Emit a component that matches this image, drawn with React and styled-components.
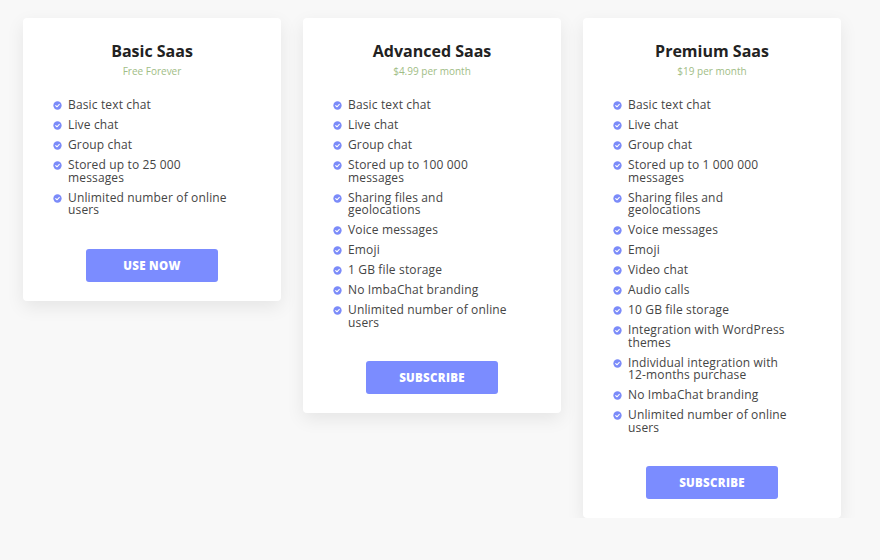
import React from 'react';
import styled, { createGlobalStyle } from 'styled-components';

const GlobalStyle = createGlobalStyle`
  body {
    margin: 0;
    background: #f8f8f8;
    font-family: "Open Sans", "Noto Sans", sans-serif;
  }
`;

const plans = [
  {
    name: 'Basic Saas',
    price: 'Free Forever',
    button: 'Use now',
    features: [
      'Basic text chat',
      'Live chat',
      'Group chat',
      'Stored up to 25 000 messages',
      'Unlimited number of online users',
    ],
  },
  {
    name: 'Advanced Saas',
    price: '$4.99 per month',
    button: 'Subscribe',
    features: [
      'Basic text chat',
      'Live chat',
      'Group chat',
      'Stored up to 100 000 messages',
      'Sharing files and geolocations',
      'Voice messages',
      'Emoji',
      '1 GB file storage',
      'No ImbaChat branding',
      'Unlimited number of online users',
    ],
  },
  {
    name: 'Premium Saas',
    price: '$19 per month',
    button: 'Subscribe',
    features: [
      'Basic text chat',
      'Live chat',
      'Group chat',
      'Stored up to 1 000 000 messages',
      'Sharing files and geolocations',
      'Voice messages',
      'Emoji',
      'Video chat',
      'Audio calls',
      '10 GB file storage',
      'Integration with WordPress themes',
      'Individual integration with 12-months purchase',
      'No ImbaChat branding',
      'Unlimited number of online users',
    ],
  },
];

function CheckDot() {
  return (
    <Dot viewBox="0 0 10 10">
      <circle cx="5" cy="5" r="4.6" fill="#7b8bf9" />
      <path d="M3 5.1 L4.4 6.4 L7 3.7" stroke="#fff" strokeWidth="1.2" fill="none" strokeLinecap="round" strokeLinejoin="round" />
    </Dot>
  );
}

export default function App() {
  return (
    <Page>
      <GlobalStyle />
      {plans.map((plan) => (
        <Card key={plan.name}>
          <Title>{plan.name}</Title>
          <Price>{plan.price}</Price>
          <Features>
            {plan.features.map((f) => (
              <Feature key={f}>
                <CheckDot />
                <FeatureText>{f}</FeatureText>
              </Feature>
            ))}
          </Features>
          <Button>{plan.button}</Button>
        </Card>
      ))}
    </Page>
  );
}

const Page = styled.div`
  display: flex;
  align-items: flex-start;
  gap: 22px;
  padding: 18px 0 0 23px;
`;

const Card = styled.div`
  width: 258px;
  box-sizing: border-box;
  background: #fff;
  border-radius: 4px;
  box-shadow: 0 6px 18px rgba(0, 0, 0, 0.08);
  padding: 24px 30px 19px;
  display: flex;
  flex-direction: column;
  align-items: center;
`;

const Title = styled.h3`
  margin: 0;
  font-size: 16px;
  line-height: 18px;
  font-weight: 700;
  color: #222;
`;

const Price = styled.div`
  margin-top: 4px;
  font-size: 10px;
  line-height: 14px;
  color: #9fbd86;
`;

const Features = styled.ul`
  list-style: none;
  margin: 21px 0 0;
  padding: 0;
  align-self: stretch;
  display: flex;
  flex-direction: column;
  gap: 7.5px;
`;

const Feature = styled.li`
  display: flex;
  align-items: flex-start;
  gap: 6px;
`;

const Dot = styled.svg`
  width: 9px;
  height: 9px;
  flex: none;
  margin-top: 2px;
`;

const FeatureText = styled.span`
  font-size: 12px;
  letter-spacing: 0.15px;
  line-height: 12.5px;
  color: #454545;
  max-width: 163px;
`;

const Button = styled.button`
  margin-top: 32px;
  width: 132px;
  height: 33px;
  border: none;
  border-radius: 3px;
  background: #7b8cff;
  color: #fff;
  font-family: inherit;
  font-size: 11.5px;
  font-weight: 800;
  letter-spacing: 0.3px;
  text-transform: uppercase;
  cursor: pointer;
`;
